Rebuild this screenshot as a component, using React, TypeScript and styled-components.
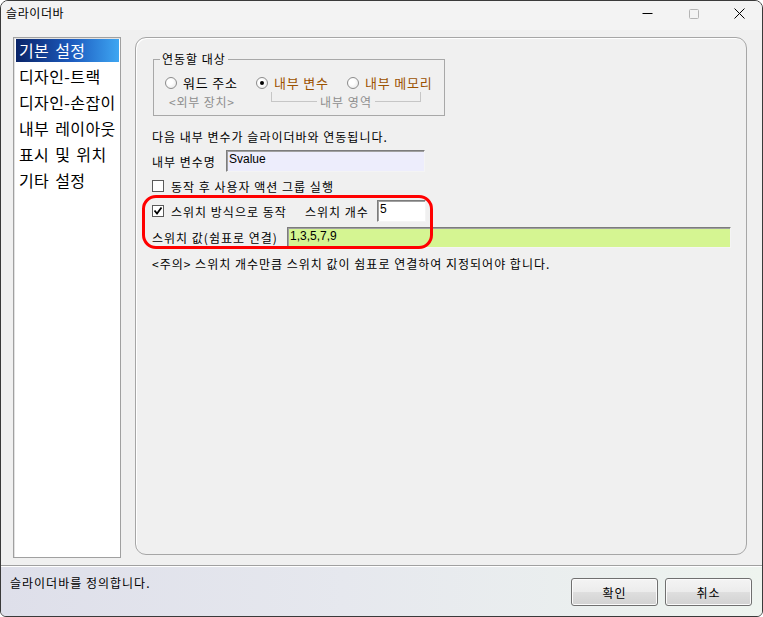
import React from "react";
import styled, { createGlobalStyle } from "styled-components";

const GlobalStyle = createGlobalStyle`
  html, body {
    margin: 0;
    padding: 0;
    background: #ffffff;
  }
  body {
    font-family: "Noto Sans CJK KR", "Noto Sans", sans-serif;
    font-size: 12px;
    letter-spacing: 1px;
    color: #000;
  }
  * {
    box-sizing: border-box;
  }
`;

const Window = styled.div`
  width: 763px;
  height: 617px;
  border: 1px solid #3a3a3a;
  border-radius: 8px 8px 6px 6px;
  background: #f0f0f0;
  display: flex;
  flex-direction: column;
  overflow: hidden;
`;

// Title bar with caption and window controls
const TitleBar = styled.div`
  height: 29px;
  flex-shrink: 0;
  display: flex;
  align-items: flex-start;
  background: #f3f3f3;
`;

const Caption = styled.div`
  flex: 1;
  padding: 4px 0 0 5px;
  line-height: 16px;
  letter-spacing: 0.6px;
`;

const ControlButton = styled.div`
  width: 46px;
  height: 25px;
  display: flex;
  align-items: center;
  justify-content: center;
`;

const Body = styled.div`
  height: 535px;
  flex-shrink: 0;
  display: flex;
  align-items: flex-start;
  padding: 7px 0 0 12px;
`;

// Left navigation list
const ListBox = styled.div`
  width: 108px;
  height: 521px;
  background: #fff;
  border: 1px solid #a0a0a0;
  box-shadow: inset 1px 1px 0 #e2e2e2;
  padding: 1px 1px 0 2px;
  overflow: hidden;
`;

const ListItem = styled.div<{ $selected?: boolean }>`
  height: 23px;
  margin-bottom: 3px;
  padding-left: 3px;
  font-size: 16px;
  letter-spacing: 0.4px;
  word-spacing: 2px;
  line-height: 23px;
  white-space: nowrap;
  color: ${(p) => (p.$selected ? "#fff" : "#000")};
  background: ${(p) =>
    p.$selected ? "linear-gradient(90deg, #0a2468 0%, #1d5cc0 55%, #3ea6f2 100%)" : "transparent"};
`;

// Right settings panel
const Panel = styled.div`
  width: 612px;
  height: 518px;
  margin-left: 14px;
  border: 1px solid #a6a6a6;
  border-radius: 11px;
  box-shadow: inset 1px 1px 0 #fff;
  padding: 14px 0 0 16px;
`;

const GroupBox = styled.fieldset`
  width: 292px;
  margin: 0 0 0 1px;
  padding: 0 0 4px 0;
  border: 1px solid #a8a8a8;
  border-radius: 0;
`;

const GroupLegend = styled.legend`
  margin-left: 6px;
  padding: 0 2px;
  line-height: 14px;
`;

const RadioRow = styled.div`
  margin-top: 7px;
  height: 18px;
  padding-left: 11px;
  display: grid;
  grid-template-columns: 91px 91px auto;
  align-items: center;
`;

const RadioOption = styled.label`
  display: flex;
  align-items: center;
  gap: 6px;
  white-space: nowrap;
`;

const RadioCircle = styled.span<{ $checked?: boolean }>`
  width: 12px;
  height: 12px;
  border-radius: 50%;
  border: 1px solid #8c8c8c;
  background: radial-gradient(circle at 40% 40%, #ffffff 30%, #e4e4e4 100%);
  display: flex;
  align-items: center;
  justify-content: center;

  &::after {
    content: "";
    width: 4px;
    height: 4px;
    border-radius: 50%;
    background: ${(p) => (p.$checked ? "#000" : "transparent")};
  }
`;

const RadioText = styled.span<{ $accent?: boolean }>`
  font-size: 13px;
  letter-spacing: 0.8px;
  color: ${(p) => (p.$accent ? "#9c5200" : "#000")};
`;

const SubRow = styled.div`
  height: 20px;
  padding-left: 15px;
  display: flex;
  align-items: center;
`;

const GrayText = styled.span`
  color: #8e8e8e;
  white-space: nowrap;
`;

const SubLabel = styled(GrayText)`
  width: 102px;
  letter-spacing: 0.8px;
`;

const Bracket = styled.div`
  width: 150px;
  height: 20px;
  display: flex;
  align-items: center;
`;

const BracketLine = styled.span<{ $side: "left" | "right" }>`
  flex: 1;
  height: 10px;
  align-self: flex-start;
  margin-top: 1px;
  border-bottom: 1px solid #c6c6c6;
  border-${(p) => p.$side}: 1px solid #c6c6c6;
`;

const BracketText = styled(GrayText)`
  padding: 0 3px;
`;

const InfoText = styled.div<{ $gap?: number }>`
  margin-top: ${(p) => p.$gap ?? 13}px;
  line-height: 16px;
  white-space: nowrap;
`;

const FieldRow = styled.div<{ $gap?: number; $height?: number }>`
  margin-top: ${(p) => p.$gap ?? 5}px;
  height: ${(p) => p.$height ?? 22}px;
  display: flex;
  align-items: center;
`;

const FieldLabel = styled.span<{ $width: number }>`
  width: ${(p) => p.$width}px;
  flex-shrink: 0;
  white-space: nowrap;
`;

const TextBox = styled.div<{ $width: number; $bg?: string }>`
  width: ${(p) => p.$width}px;
  height: 100%;
  background: ${(p) => p.$bg ?? "#fff"};
  border: 1px solid;
  border-color: #7c7c7c #f4f4f4 #f4f4f4 #7c7c7c;
  box-shadow: inset 1px 1px 0 #a0a0a0;
  padding: 0 2px;
  font-family: "Liberation Sans", Arial, sans-serif;
  font-size: 12px;
  letter-spacing: 0;
  line-height: 17px;
  color: #000;
`;

const CheckOption = styled.label<{ $width?: number }>`
  display: flex;
  align-items: center;
  gap: 7px;
  white-space: nowrap;
  ${(p) => (p.$width ? `width: ${p.$width}px; flex-shrink: 0;` : "")}
`;

const CheckBox = styled.span`
  width: 12px;
  height: 12px;
  border: 1px solid #5a5a5a;
  background: #fff;
  display: flex;
  align-items: center;
  justify-content: center;
`;

const SwitchSection = styled.div`
  position: relative;
  margin-top: 6px;
`;

// Red annotation drawn over the switch settings
const Highlight = styled.div`
  position: absolute;
  top: -5px;
  left: -10px;
  width: 291px;
  height: 54px;
  border: 3px solid #ff0000;
  border-radius: 14px;
  pointer-events: none;
  z-index: 1;
`;

const Separator = styled.div`
  height: 2px;
  flex-shrink: 0;
  border-top: 1px solid #a0a0a0;
  border-bottom: 1px solid #ffffff;
`;

const StatusBar = styled.div`
  flex: 1;
  display: flex;
  align-items: flex-start;
  padding: 8px 10px 0 9px;
  background: linear-gradient(90deg, #dedfea 0%, #e6e8ee 45%, #eef4ef 100%);
`;

const StatusText = styled.div`
  flex: 1;
  line-height: 16px;
  white-space: nowrap;
`;

const DialogButton = styled.button`
  width: 87px;
  height: 28px;
  margin: 3px 0 0 7px;
  border: 1px solid #707070;
  border-radius: 3px;
  background: linear-gradient(180deg, #f4f4f4 0%, #ececec 48%, #dedede 52%, #d2d2d2 100%);
  box-shadow: inset 0 0 0 1px #fbfbfb;
  font-family: "Noto Sans CJK KR", "Noto Sans", sans-serif;
  font-size: 12px;
  letter-spacing: 1px;
  color: #000;
  padding: 0;
`;

const navItems = ["기본 설정", "디자인-트랙", "디자인-손잡이", "내부 레이아웃", "표시 및 위치", "기타 설정"];

const CheckMark = () => (
  <svg width="10" height="10" viewBox="0 0 10 10">
    <path d="M1.5 4.5 L4 7.5 L8.5 1.5" fill="none" stroke="#000" strokeWidth="1.8" />
  </svg>
);

const App: React.FC = () => {
  return (
    <>
      <GlobalStyle />
      <Window>
        <TitleBar>
          <Caption>슬라이더바</Caption>
          <ControlButton>
            <svg width="11" height="11" viewBox="0 0 11 11">
              <line x1="0.5" y1="5.5" x2="10.5" y2="5.5" stroke="#000" strokeWidth="1" />
            </svg>
          </ControlButton>
          <ControlButton>
            <svg width="11" height="11" viewBox="0 0 11 11">
              <rect x="1.5" y="1.5" width="9" height="9" rx="1" fill="none" stroke="#b4b4b4" strokeWidth="1" />
            </svg>
          </ControlButton>
          <ControlButton>
            <svg width="11" height="11" viewBox="0 0 11 11">
              <path d="M0.5 0.5 L10.5 10.5 M10.5 0.5 L0.5 10.5" stroke="#000" strokeWidth="1" />
            </svg>
          </ControlButton>
        </TitleBar>

        <Body>
          <ListBox>
            {navItems.map((item, i) => (
              <ListItem key={item} $selected={i === 0}>
                {item}
              </ListItem>
            ))}
          </ListBox>

          <Panel>
            <GroupBox>
              <GroupLegend>연동할 대상</GroupLegend>
              <RadioRow>
                <RadioOption>
                  <RadioCircle />
                  <RadioText>워드 주소</RadioText>
                </RadioOption>
                <RadioOption>
                  <RadioCircle $checked />
                  <RadioText $accent>내부 변수</RadioText>
                </RadioOption>
                <RadioOption>
                  <RadioCircle />
                  <RadioText $accent>내부 메모리</RadioText>
                </RadioOption>
              </RadioRow>
              <SubRow>
                <SubLabel>&lt;외부 장치&gt;</SubLabel>
                <Bracket>
                  <BracketLine $side="left" />
                  <BracketText>내부 영역</BracketText>
                  <BracketLine $side="right" />
                </Bracket>
              </SubRow>
            </GroupBox>

            <InfoText>다음 내부 변수가 슬라이더바와 연동됩니다.</InfoText>

            <FieldRow>
              <FieldLabel $width={74}>내부 변수명</FieldLabel>
              <TextBox $width={199} $bg="#ededfc">Svalue</TextBox>
            </FieldRow>

            <FieldRow $gap={6} $height={16}>
              <CheckOption>
                <CheckBox />
                <span>동작 후 사용자 액션 그룹 실행</span>
              </CheckOption>
            </FieldRow>

            <SwitchSection>
              <Highlight />
              <FieldRow $gap={0}>
                <CheckOption $width={153}>
                  <CheckBox>
                    <CheckMark />
                  </CheckBox>
                  <span>스위치 방식으로 동작</span>
                </CheckOption>
                <FieldLabel $width={72}>스위치 개수</FieldLabel>
                <TextBox $width={49}>5</TextBox>
              </FieldRow>
              <FieldRow $height={21}>
                <FieldLabel $width={135}>스위치 값(쉼표로 연결)</FieldLabel>
                <TextBox $width={444} $bg="#d5f592">1,3,5,7,9</TextBox>
              </FieldRow>
            </SwitchSection>

            <InfoText $gap={8}>
              &lt;주의&gt; 스위치 개수만큼 스위치 값이 쉼표로 연결하여 지정되어야 합니다.
            </InfoText>
          </Panel>
        </Body>

        <Separator />

        <StatusBar>
          <StatusText>슬라이더바를 정의합니다.</StatusText>
          <DialogButton>확인</DialogButton>
          <DialogButton>취소</DialogButton>
        </StatusBar>
      </Window>
    </>
  );
};

export default App;
